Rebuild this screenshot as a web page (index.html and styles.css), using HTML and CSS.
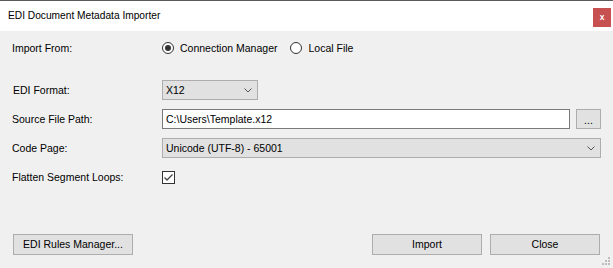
FILE: index.html
```html
<!DOCTYPE html>
<html lang="en">
<head>
    <meta charset="UTF-8">
    <title>EDI Document Metadata Importer</title>
    <link rel="stylesheet" href="styles.css">
</head>
<body>
    <div class="window">
        <div class="titlebar">
            <span class="title">EDI Document Metadata Importer</span>
            <div class="close-btn">x</div>
        </div>
        <div class="content">
            <div class="row first">
                <label class="label">Import From:</label>
                <div class="field radios">
                    <span class="radio checked"></span>
                    <span class="radio-text">Connection Manager</span>
                    <span class="radio"></span>
                    <span class="radio-text">Local File</span>
                </div>
            </div>
            <div class="row">
                <label class="label indent">EDI Format:</label>
                <div class="field">
                    <div class="combo small">
                        <span>X12</span>
                        <svg class="chevron" width="8" height="5" viewBox="0 0 8 5"><path d="M0.5 0.5 L4 4 L7.5 0.5" fill="none" stroke="#555" stroke-width="1"/></svg>
                    </div>
                </div>
            </div>
            <div class="row">
                <label class="label">Source File Path:</label>
                <div class="field">
                    <div class="textbox">C:\Users\Template.x12</div>
                    <div class="button browse">...</div>
                </div>
            </div>
            <div class="row">
                <label class="label">Code Page:</label>
                <div class="field">
                    <div class="combo wide">
                        <span>Unicode (UTF-8) - 65001</span>
                        <svg class="chevron" width="8" height="5" viewBox="0 0 8 5"><path d="M0.5 0.5 L4 4 L7.5 0.5" fill="none" stroke="#555" stroke-width="1"/></svg>
                    </div>
                </div>
            </div>
            <div class="row">
                <label class="label">Flatten Segment Loops:</label>
                <div class="field">
                    <div class="checkbox">
                        <svg width="11" height="11" viewBox="0 0 11 11"><path d="M1.5 5.5 L4 8 L9.5 2.5" fill="none" stroke="#444" stroke-width="1.3"/></svg>
                    </div>
                </div>
            </div>
            <div class="footer">
                <div class="button rules">EDI Rules Manager...</div>
                <div class="actions">
                    <div class="button action">Import</div>
                    <div class="button action">Close</div>
                </div>
            </div>
        </div>
        <svg class="grip" width="9" height="9" viewBox="0 0 9 9">
            <rect x="6" y="0" width="2" height="2" fill="#bcbcbc"/>
            <rect x="3" y="3" width="2" height="2" fill="#bcbcbc"/>
            <rect x="6" y="3" width="2" height="2" fill="#bcbcbc"/>
            <rect x="0" y="6" width="2" height="2" fill="#bcbcbc"/>
            <rect x="3" y="6" width="2" height="2" fill="#bcbcbc"/>
            <rect x="6" y="6" width="2" height="2" fill="#bcbcbc"/>
        </svg>
    </div>
</body>
</html>
```

FILE: styles.css
```css
body {
    margin: 0;
    background-color: #f0f0f0;
    font-family: "Liberation Sans", Arial, sans-serif;
    font-size: 10.5px;
    color: #000;
}
.window {
    position: relative;
    width: 613px;
    height: 268px;
    box-sizing: border-box;
    border-top: 1px solid #5a5a5a;
    background-color: #f0f0f0;
}
.titlebar {
    display: flex;
    justify-content: space-between;
    align-items: flex-start;
    height: 30px;
    background-color: #fff;
}
.title {
    padding: 9px 0 0 8px;
    font-size: 10.2px;
    line-height: 12px;
}
.close-btn {
    width: 18px;
    height: 19px;
    margin: 7px 2px 0 0;
    background-color: #c75050;
    color: #fff;
    font-weight: bold;
    font-size: 8.5px;
    line-height: 18px;
    text-align: center;
}
.content {
    display: flex;
    flex-direction: column;
    gap: 9px;
    padding: 7px 12px 0 12px;
}
.row {
    display: flex;
    align-items: center;
    height: 20px;
}
.row.first {
    margin-bottom: 13px;
}
.label {
    width: 150px;
    flex-shrink: 0;
}
.label.indent {
    padding-left: 1px;
    width: 149px;
}
.field {
    display: flex;
    align-items: center;
    flex: 1;
}
.radios {
    height: 20px;
}
.radio {
    width: 10px;
    height: 10px;
    border: 1px solid #333;
    border-radius: 50%;
    position: relative;
    flex-shrink: 0;
    background-color: #fff;
}
.radio.checked::after {
    content: "";
    position: absolute;
    left: 2px;
    top: 2px;
    width: 6px;
    height: 6px;
    border-radius: 50%;
    background-color: #333;
}
.radio-text {
    margin-left: 6px;
    margin-right: 13px;
}
.combo {
    display: flex;
    align-items: center;
    justify-content: space-between;
    height: 20px;
    box-sizing: border-box;
    border: 1px solid #adadad;
    background-color: #e1e1e1;
    padding: 0 5px 0 3px;
}
.combo.small {
    width: 96px;
}
.combo.wide {
    width: 439px;
}
.textbox {
    width: 408px;
    height: 20px;
    box-sizing: border-box;
    border: 1px solid #7a7a7a;
    background-color: #fff;
    padding: 0 3px;
    line-height: 18px;
}
.button {
    box-sizing: border-box;
    border: 1px solid #adadad;
    background-color: #e1e1e1;
    text-align: center;
}
.browse {
    width: 25px;
    height: 20px;
    margin-left: 6px;
    line-height: 20px;
}
.checkbox {
    width: 13px;
    height: 13px;
    box-sizing: border-box;
    border: 1px solid #333;
    background-color: #fff;
    display: flex;
    align-items: center;
    justify-content: center;
}
.footer {
    display: flex;
    justify-content: space-between;
    margin-top: 38px;
    padding: 0 1px;
}
.actions {
    display: flex;
    gap: 8px;
}
.rules {
    width: 120px;
    height: 21px;
    line-height: 19px;
}
.action {
    width: 110px;
    height: 21px;
    line-height: 19px;
}
.grip {
    position: absolute;
    right: 2px;
    bottom: 2px;
}
```
